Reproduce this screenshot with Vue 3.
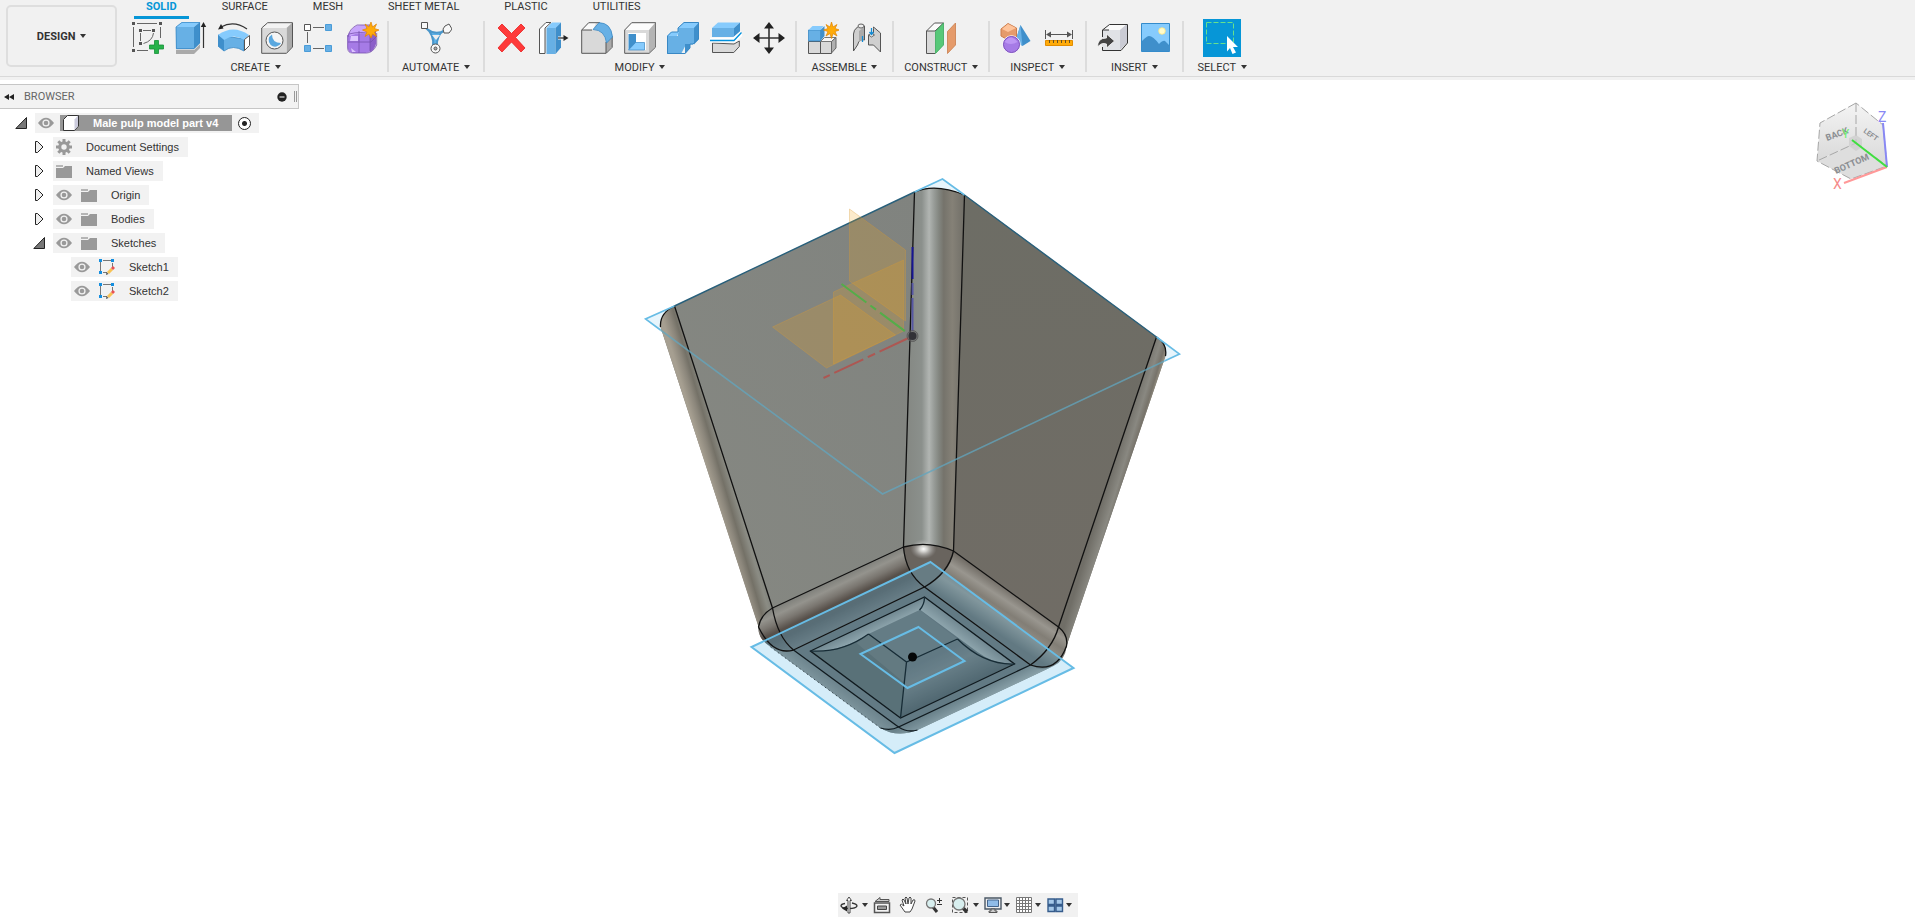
<script setup>
import { ref } from 'vue'

const tabs = ['SOLID', 'SURFACE', 'MESH', 'SHEET METAL', 'PLASTIC', 'UTILITIES']
const activeTab = ref('SOLID')

const groups = [
  { label: 'CREATE', icons: ['sketch', 'extrude', 'revolve', 'hole', 'pattern', 'form'] },
  { label: 'AUTOMATE', icons: ['automate'] },
  { label: 'MODIFY', icons: ['delete', 'presspull', 'fillet', 'shell', 'combine', 'split', 'move'] },
  { label: 'ASSEMBLE', icons: ['component', 'joint'] },
  { label: 'CONSTRUCT', icons: ['plane'] },
  { label: 'INSPECT', icons: ['interference', 'measure'] },
  { label: 'INSERT', icons: ['derive', 'image'] },
  { label: 'SELECT', icons: ['select'] }
]

const tree = [
  { label: 'Document Settings', level: 1, arrow: 'closed', icons: ['gear'] },
  { label: 'Named Views', level: 1, arrow: 'closed', icons: ['folder'] },
  { label: 'Origin', level: 1, arrow: 'closed', icons: ['eye', 'folder'] },
  { label: 'Bodies', level: 1, arrow: 'closed', icons: ['eye', 'folder'] },
  { label: 'Sketches', level: 1, arrow: 'open', icons: ['eye', 'folder'] },
  { label: 'Sketch1', level: 2, arrow: '', icons: ['eye', 'sketchitem'] },
  { label: 'Sketch2', level: 2, arrow: '', icons: ['eye', 'sketchitem'] }
]

const navTools = [
  { id: 'orbit', menu: true },
  { id: 'lookat', menu: false },
  { id: 'pan', menu: false },
  { id: 'zoom', menu: false },
  { id: 'fit', menu: true },
  { id: 'display', menu: true },
  { id: 'grid', menu: true },
  { id: 'viewports', menu: true }
]
</script>

<template>
  <div class="app">
    <svg class="sprite" width="0" height="0" aria-hidden="true">
      <symbol id="i-sketch" viewBox="0 0 32 32">
        <g fill="none" stroke="#666" stroke-width="1"><path d="M1.5 5v20M5 1.5h20M28.500 5v11M5 28.500h11M8.500 11v8M11 8.500h8M21.500 11q-1 8-10 10.500" /></g>
        <path fill="#555" d="M0 0h3v3H0zM27 0h3v3h-3zM0 27h3v3H0zM7 7h3v3H7zM20 7h3v3h-3zM7 20h3v3H7z" />
        <path fill="#27b24a" stroke="#159138" stroke-width=".8" d="M22.500 18.500h4v4.500h5v4h-5v4.500h-4V27h-5v-4h5z" />
      </symbol>
      <symbol id="i-extrude" viewBox="0 0 32 32">
        <path fill="#aaa" d="M1 28h18l6-6v4l-6 6H1z" /><path fill="#ddd" d="M1 27h18l6-6v1l-6 6H1z" />
        <path fill="#67b0e5" d="M1 5h18v22H1z" /><path fill="#86cbfd" d="M1 5l6-5h18l-6 5z" /><path fill="#3f8fcb" d="M19 5l6-5v21l-6 6z" />
        <path fill="none" stroke="#3988c4" stroke-width=".8" d="M1 5l6-4.600h17.600V21L19 26.600H1.400z" />
        <path stroke="#333" stroke-width="1.200" d="M28.500 4v22" /><path fill="#222" d="M28.500 0l2.700 5h-5.400z" />
      </symbol>
      <symbol id="i-revolve" viewBox="0 0 32 32">
        <path fill="#67b0e5" stroke="#3988c4" stroke-width=".8" d="M0 13v11l6 5q9-7 20 0V17z" />
        <path fill="#86cbfd" d="M0 13q15-11 31 0l-5 5q-10-7-20 0z" /><path fill="#3f8fcb" d="M0 13l6 5v11l-6-5z" />
        <path fill="#fff" stroke="#555" d="M26.500 17.500l5-4v10l-5 5z" />
        <path fill="none" stroke="#333" stroke-width="1.300" d="M3 5q13-7 26 2" /><path fill="#222" d="M0 7.500l3-5.500 2.500 4.500z" />
      </symbol>
      <symbol id="i-hole" viewBox="0 0 32 32">
        <path fill="#f3f3f3" d="M1 6l6-5h24l-5.500 5z" /><path fill="#aaa" d="M25.500 6L31 1v24l-5.500 6z" /><path fill="#d9d9d9" d="M1 6h24.500v25H1z" />
        <path fill="none" stroke="#555" d="M.7 6l6-5.300h24.800V25l-6 6.300H.7z" />
        <circle cx="13.500" cy="18.500" r="8.500" fill="#f5f5f5" stroke="#555" /><path fill="#5aa8df" d="M11 12.500a6.500 6.500 0 1 0 9 8.500q-9 0-9-8.500z" />
      </symbol>
      <symbol id="i-pattern" viewBox="0 0 32 32">
        <path stroke="#666" fill="none" d="M9 5.500h11M3.500 10v11M9 26.500h11" /><path fill="#fff" stroke="#555" d="M.5 2.500h6v6h-6z" />
        <path fill="#67b0e5" stroke="#4a9cd8" d="M21.500 2.500h6v6h-6zM.5 23.500h6v6h-6zM21.500 23.500h6v6h-6z" />
      </symbol>
      <symbol id="i-form" viewBox="0 0 32 32">
        <rect x=".5" y="9" width="24" height="22" rx="6" fill="#a67be6" /><path fill="#c7a4fb" d="M2 12q4-10 14-9h8q4 1 3 5l-4 5q-10-4-20 1z" />
        <path fill="#8c5fc9" d="M23 12l6-5v15q-1 5-6 8z" /><path fill="none" stroke="#7750ae" stroke-width=".8" d="M1 15q1-8 9-12h14M1 20h23l6-6M12 9v22M2 12q12-3 21 0v18M.7 13v13q0 5 5 5h14q6 0 10-8V11" />
        <path fill="#ddc5ff" d="M4 14h7v5H3zM4 26l5 4H5z" /><path fill="#ffab09" stroke="#e18400" stroke-width=".7" d="M24 0l1.500 5 4-3-2 4.500 4.500 1.500-4.500 2 2 4.500-4-2.500L24 16l-2-4-4 2.500 2-4.500-4.500-2L20 6.500 18 2l4 3z" />
      </symbol>
      <symbol id="i-automate" viewBox="0 0 32 32">
        <path d="M7 7q9 7 18 1Q16 13 17 25h-4Q15 13 5 5z" fill="#5eb2e8" stroke="#4a96ca" stroke-width="2" /><path fill="#eee" d="M12 13h8l-4 5z" />
        <path fill="#f8f8f8" stroke="#555" d="M1.500.5h6v6h-6zM25 4l4-2 3 5-3 4h-5l-1-4z" /><circle cx="15.500" cy="26.500" r="4.500" fill="#f8f8f8" stroke="#555" /><circle cx="15.500" cy="26.500" r="1.500" fill="#aaa" stroke="#555" />
      </symbol>
      <symbol id="i-delete" viewBox="0 0 32 32"><path fill="#fe3a3a" stroke="#e82020" stroke-width=".8" d="M7 2l9.500 9.500L26 2l4 4-9.500 9.500L30 26l-4 4-9.500-10L7 30l-4-4 9.500-10.500L3 6z" /></symbol>
      <symbol id="i-presspull" viewBox="0 0 32 32">
        <path fill="#dedede" d="M2 7h6v24H2z" /><path fill="#fff" stroke="#555" d="M7 31.500H1.500V7L8 .5h5L7 6z" />
        <path fill="#67b0e5" d="M8.500 6h9v26h-9z" /><path fill="#86cbfd" d="M8.500 6L14 .5h9L17.500 6z" /><path fill="#3f8fcb" d="M17.500 6L23 .5v25L17.500 32z" /><path fill="#fff" d="M20 14.500h4v3h-4z" />
        <path stroke="#222" stroke-width="1.200" d="M20 16h7" /><path fill="#222" d="M25.500 13l5 3-5 3z" />
      </symbol>
      <symbol id="i-fillet" viewBox="0 0 32 32">
        <path fill="#d9d9d9" d="M1 9l9-8h7l8 16v14H1z" /><path fill="#fafafa" d="M1 8l7-7h7l-3 7z" /><path fill="#aaa" d="M25 20l6-6v11l-6 6z" />
        <path fill="none" stroke="#555" d="M.7 8l7-7.300H19M.7 8v23.300h24.500l6-6V14M25 31V20M1 8h10" />
        <path fill="#67b0e5" stroke="#3988c4" stroke-width=".8" d="M12 7.500L18 .7q12 0 13.500 14.300L25.500 21Q24 8 12 7.500z" />
      </symbol>
      <symbol id="i-shell" viewBox="0 0 32 32">
        <path fill="#fcfcfc" d="M1 8l7-7h23l-6 7v23H1z" /><path fill="#b4b4b4" d="M25 8l6-7v24l-6 6z" /><path fill="#d9d9d9" d="M1.200 8h23.800v23H1.200z" /><path fill="none" stroke="#555" d="M.7 8l7-7.300h24V25l-6.500 6.300H.7z" />
        <path fill="#fff" d="M4 11h18v17H4z" /><path fill="#3f8fcb" d="M4.500 12h7.500v9.500L4.500 28z" /><path fill="#86cbfd" stroke="#3988c4" stroke-width=".7" d="M4.500 28l7-7.500h9V28z" />
      </symbol>
      <symbol id="i-combine" viewBox="0 0 32 32">
        <path fill="#67b0e5" d="M0 14h11V6l6-5.500h15V17l-6 5.500h-7L14 32H0z" /><path fill="#86cbfd" d="M0 14l4-4h8l-2 4zM11 6L17 .5h15L27 6z" />
        <path fill="#3f8fcb" d="M27 6l5-5.500V17l-5 5.500zM18 22h5v4l-5 6z" /><path fill="none" stroke="#3988c4" d="M.5 14l4-4H11V6L17 .5h14.500V17L26 22h-3v4l-5 5.500H.5z" />
      </symbol>
      <symbol id="i-split" viewBox="0 0 32 32">
        <path fill="#67b0e5" d="M2 6h22v9H2z" /><path fill="#86cbfd" d="M2 6l6-5.500h22L24 6z" /><path fill="#3f8fcb" d="M24 6l6-5.500V10l-6 5z" />
        <path fill="#d9d9d9" stroke="#555" d="M2.500 21v9.500h21.300l5.500-6V19L24 22z" /><path fill="none" stroke="#fff" stroke-width="5" d="M0 18h24l8-7" /><path fill="none" stroke="#0090dc" stroke-width="1.300" d="M0 18.500h24l7.500-8" />
      </symbol>
      <symbol id="i-move" viewBox="0 0 32 32"><path stroke="#333" stroke-width="1.600" d="M16 4v24M4 16h24" /><path fill="#222" d="M16 0l5 6.500H11zM16 32l5-6.500H11zM0 16l6.500-5v10zM32 16l-6.500-5v10z" /></symbol>
      <symbol id="i-component" viewBox="0 0 32 32">
        <path fill="#d9d9d9" stroke="#555" d="M1.500 19.500h12v12h-12zM13.500 19.500h11v12h-11z" /><path fill="#f7f7f7" stroke="#777" d="M13.500 19.500l4-4H29l-4.500 4z" /><path fill="#b0b0b0" stroke="#666" d="M24.500 19.500l4.500-4V26l-4.500 5z" />
        <path fill="#67b0e5" stroke="#3988c4" stroke-width=".8" d="M1.500 8h12v11h-12z" /><path fill="#86cbfd" d="M1.500 8l4-4h11l-3 4z" /><path fill="#3f8fcb" d="M13.500 8l4-4v10l-4 5z" />
        <path fill="#ffab09" stroke="#e18400" stroke-width=".7" d="M24.500 0l1.500 5 4-2.500-2 4L32.500 8 28 9.500l2 4.500-4-2.500-1.500 5L23 11.500 19 14l2-4.500L16.500 8 21 6.500l-2-4L23 5z" />
      </symbol>
      <symbol id="i-joint" viewBox="0 0 32 32">
        <path fill="#cfcfcf" stroke="#555" d="M3.500 12q0-4 4-7 4-4 7-1v14q-5-2-7 5l-4 6z" /><path fill="#aaa" d="M9 9l5-4v12l-5 3z" /><ellipse cx="11" cy="4" rx="3" ry="2" fill="#eee" stroke="#666" />
        <path fill="#cfcfcf" stroke="#555" d="M23.500 6.500V5l7 6v19l-7-7h-5V13l5-2z" /><path fill="#eee" stroke="#666" d="M18.500 13l3-2 3 2-3 2z" />
        <path stroke="#148bd3" stroke-width="1.300" fill="none" d="M12.500 14v6M21.500 6v6M19.500 10l2 2.500 2-2.500" />
      </symbol>
      <symbol id="i-plane" viewBox="0 0 32 32">
        <path fill="#d9d9d9" d="M2 8h8v23H2z" /><path fill="#fafafa" stroke="#555" d="M1.500 9l8-8h9L10 9z" /><path fill="none" stroke="#555" d="M1.500 9v22.500H10" />
        <path fill="#57c878" stroke="#3aa75a" stroke-width=".8" d="M10.500 9.500l8-8.500v22l-8 8.500z" /><path fill="#e59b6b" stroke="#c97d4d" stroke-width=".8" d="M22.500 9.500l8-8.500v22l-8 8.500z" />
      </symbol>
      <symbol id="i-interference" viewBox="0 0 32 32">
        <path fill="#e59b6b" stroke="#cd7d4c" d="M1 7l7-5.500 8.500 4.500v9L8 18l-7-4z" /><path fill="#ffc49b" d="M2 7l6-5 8 4-8 4z" />
        <path fill="#3f8fcb" d="M20.500 3l10 16-8 5-7-5z" /><path fill="#67b0e5" d="M20.500 3l2 21-7-5z" />
        <circle cx="11.500" cy="22.500" r="8.700" fill="#a67be6" stroke="#fff" /><circle cx="11.500" cy="22.500" r="8" fill="#a67be6" stroke="#8055bd" /><path fill="#bd96f4" d="M4.500 20q6-9 13 0-7 4-13 0z" />
      </symbol>
      <symbol id="i-measure" viewBox="0 0 32 32">
        <path fill="none" stroke="#555" d="M2.500 8v9M29.500 8v9M5 12.500h22" /><path fill="#555" d="M3 12.500l5-3v6zM29 12.500l-5-3v6z" /><path fill="#ffab09" stroke="#e28d00" d="M2.500 18.500h27v5h-27z" />
        <path stroke="#665022" d="M6.500 18v3M10.500 18v3M14.500 18v3M18.500 18v3M22.500 18v3M26.500 18v3" />
      </symbol>
      <symbol id="i-derive" viewBox="0 0 32 32">
        <path fill="#fafafa" d="M5 8l7-6h18l-7 6z" /><path fill="#e0e2e6" d="M5 8h18v20H5z" /><path fill="#cacbd4" d="M23 8l7-6v19l-7 7z" /><path fill="none" stroke="#333" d="M5.500 15V8l7-5.500h18V21L24 28.500H5.500V25M5.500 8H12" />
        <path fill="#444" stroke="#fafafa" stroke-width=".8" d="M.5 25q0-9 9-9v-4l8 7-8 7v-4q-5-2-9 3z" />
      </symbol>
      <symbol id="i-image" viewBox="0 0 32 32"><path fill="#86cbfd" stroke="#348bcb" d="M1.500 1.500h28v28h-28z" /><path fill="#3f8fcb" d="M2 19q5-5 7-5 4 0 10 8 4-4 6-3l5 5v5H2z" /><circle cx="22" cy="9" r="3.300" fill="#fffccb" stroke="#ffe47c" stroke-width=".8" /></symbol>
      <symbol id="i-select" viewBox="0 0 38 38"><path fill="#0696d7" d="M0 0h38v38H0z" /><path fill="none" stroke="#66e18c" stroke-dasharray="5 2" d="M3.500 3.500h27v21h-27z" /><path fill="#fff" d="M24 17l11 11h-5l3 5.500-3.500 1.500-2.500-6-3 3.500z" /></symbol>

      <symbol id="i-eye" viewBox="0 0 16 16"><path fill="#999" d="M0 8q8-10.500 16 0-8 10.500-16 0z" /><circle cx="8" cy="8" r="3.600" fill="#f2f2f2" /><circle cx="8" cy="8" r="2.300" fill="#999" /></symbol>
      <symbol id="i-folder" viewBox="0 0 16 16"><path fill="#b5b5b5" d="M0 2h7v2H0z" /><path fill="#999" d="M0 5h7l2-2h7v12H0z" /></symbol>
      <symbol id="i-gear" viewBox="0 0 16 16"><path stroke="#999" stroke-width="3" d="M8 0v16M0 8h16M2.300 2.300l11.400 11.400M13.700 2.300L2.300 13.700" /><circle cx="8" cy="8" r="5.800" fill="#999" /><circle cx="8" cy="8" r="2.700" fill="#f2f2f2" /></symbol>
      <symbol id="i-sketchitem" viewBox="0 0 16 16"><path fill="none" stroke="#777" d="M1.500 3v10M4 1.500h9M13.500 4v5M4 13.500h4" /><path fill="#148fe0" d="M0 0h3v3H0zM12 0h3v3h-3zM0 12h3v3H0z" /><path stroke="#f8c354" stroke-width="3" d="M9 14l4-4" /><path stroke="#e95252" stroke-width="3" d="M13 10l2-2" /><path fill="#555" d="M7 16l.5-3 2 2z" /></symbol>

      <symbol id="i-orbit" viewBox="0 0 18 18"><path fill="none" stroke="#333" stroke-width="1.300" d="M5 7.500q-4 .5-4 2.500 1 2.500 8 2.500t8-2.500q0-2-5-3" /><path fill="#fff" stroke="#444" d="M8 4.500H6.500L9 1l2.500 3.500H10V17H8z" /><path fill="#222" d="M2 12.500l5-3v6z" /></symbol>
      <symbol id="i-lookat" viewBox="0 0 18 18"><path fill="#f3f3f3" stroke="#555" stroke-width="1.500" d="M1.500 7h15v9.500h-15z" /><path fill="#999" stroke="#444" d="M4.500 10h9v3.500h-9z" /><path fill="#ccc" stroke="#555" d="M2 5.500l5-4v2h9v2z" /></symbol>
      <symbol id="i-pan" viewBox="0 0 18 18"><path fill="#fff" stroke="#444" stroke-linejoin="round" d="M6 16l-5-7q1-2 4 1L3 4q1-2 2 0l2 4-1-6q1-2 2 0l1 6 1-6q1-2 2 0v6l2-4q2-1 2 1l-3 8-2 3z" /></symbol>
      <symbol id="i-zoom" viewBox="0 0 18 18"><path stroke="#333" stroke-width="3" d="M8 11l4 5" /><circle cx="6" cy="7.500" r="4.500" fill="#d8efef" stroke="#777" stroke-width="1.300" /><path stroke="#333" d="M12 4.500h5M14.500 2v5M12 8.500h5" /></symbol>
      <symbol id="i-fit" viewBox="0 0 18 18"><path fill="none" stroke="#555" stroke-dasharray="3 2" d="M1.500 1.500h15v15h-15z" /><path stroke="#333" stroke-width="3.500" d="M11 11l5 5" /><circle cx="8" cy="8" r="6" fill="#d8efef" stroke="#777" stroke-width="1.300" /></symbol>
      <symbol id="i-display" viewBox="0 0 18 18"><path fill="#eee" stroke="#4b5866" stroke-width="1.400" d="M1 2h16v11H1z" /><path fill="#90bce8" stroke="#45658c" d="M3.500 4h11v6.500h-11z" /><path fill="#ccc" stroke="#555" d="M7 13h4v2h2v1.500H5V15h2z" /></symbol>
      <symbol id="i-grid" viewBox="0 0 18 18"><path fill="#fff" d="M1 1h16v16H1z" /><path fill="none" stroke="#777" d="M1.500 1.500h15v15h-15zM4.500 1v16M7.500 1v16M10.500 1v16M13.500 1v16M1 4.500h16M1 7.500h16M1 10.500h16M1 13.500h16" /></symbol>
      <symbol id="i-viewports" viewBox="0 0 18 18"><path fill="#a5c8e9" stroke="#365c8c" stroke-width="1.400" d="M2 3h6.500v5.500H2zM10 3h6.500v5.500H10zM2 10h6.500v5.500H2zM10 10h6.500v5.500H10z" /></symbol>
    </svg>

    <header class="toolbar">
      <button class="workspace" type="button">DESIGN <i class="caret"></i></button>
      <div class="ribbon">
        <nav class="tabs">
          <button v-for="t in tabs" :key="t" type="button" class="tab" :class="{ active: t === activeTab }" @click="activeTab = t">{{ t }}</button>
        </nav>
        <div class="groups">
          <section v-for="g in groups" :key="g.label" class="group">
            <div class="tools">
              <button v-for="i in g.icons" :key="i" type="button" class="tool" :class="{ chosen: i === 'select' }" :aria-label="i"><svg><use :href="'#i-' + i" /></svg></button>
            </div>
            <button type="button" class="group-label">{{ g.label }} <i class="caret"></i></button>
          </section>
        </div>
      </div>
    </header>

    <main class="workarea">
      <svg class="model" viewBox="635 170 645 600" width="645" height="600" role="img" aria-label="Model view">
        <defs>
          <linearGradient id="column" x1="0" x2="1" y1="0" y2="0">
            <stop offset="0" stop-color="#838681" /><stop offset=".3" stop-color="#8b908c" /><stop offset=".42" stop-color="#b1b5b2" /><stop offset=".5" stop-color="#989c98" /><stop offset=".58" stop-color="#838680" /><stop offset=".66" stop-color="#75736b" /><stop offset=".8" stop-color="#858177" /><stop offset="1" stop-color="#706e67" />
          </linearGradient>
          <linearGradient id="lface" x1="0" x2="1" y1="1" y2="0"><stop offset="0" stop-color="#868882" /><stop offset="1" stop-color="#80837f" /></linearGradient>
          <linearGradient id="rface" x1="0" x2="0" y1="0" y2="1"><stop offset="0" stop-color="#6d6d65" /><stop offset="1" stop-color="#706c65" /></linearGradient>
          <linearGradient id="ledge" gradientUnits="userSpaceOnUse" x1="701" y1="453" x2="725" y2="446"><stop offset="0" stop-color="#a69f91" /><stop offset=".3" stop-color="#8b867b" /><stop offset=".5" stop-color="#747167" /><stop offset=".8" stop-color="#8b8c84" /><stop offset="1" stop-color="#80827c" /></linearGradient>
          <linearGradient id="redge" gradientUnits="userSpaceOnUse" x1="1108" y1="480" x2="1128" y2="486"><stop offset="0" stop-color="#706e67" /><stop offset=".5" stop-color="#898881" /><stop offset=".75" stop-color="#77736a" /><stop offset="1" stop-color="#a9a18f" /></linearGradient>
          <linearGradient id="lfillet" gradientUnits="userSpaceOnUse" x1="836" y1="579" x2="855" y2="619"><stop offset="0" stop-color="#7f807b" /><stop offset=".17" stop-color="#94938d" /><stop offset=".35" stop-color="#7a7670" /><stop offset=".52" stop-color="#57504a" /><stop offset=".7" stop-color="#54504c" /><stop offset="1" stop-color="#686561" /></linearGradient>
          <linearGradient id="rfillet" gradientUnits="userSpaceOnUse" x1="1008" y1="587" x2="983" y2="625"><stop offset="0" stop-color="#69645d" /><stop offset=".3" stop-color="#99968f" /><stop offset=".5" stop-color="#827e76" /><stop offset=".65" stop-color="#8d8981" /><stop offset="1" stop-color="#62615d" /></linearGradient>
          <linearGradient id="llip" gradientUnits="userSpaceOnUse" x1="840" y1="682" x2="825" y2="702"><stop offset="0" stop-color="#6b6a66" /><stop offset="1" stop-color="#9a9993" /></linearGradient>
          <linearGradient id="rlip" gradientUnits="userSpaceOnUse" x1="970" y1="694" x2="978" y2="710"><stop offset="0" stop-color="#6c6c68" /><stop offset="1" stop-color="#aaa9a3" /></linearGradient>
          <linearGradient id="lrecess" gradientUnits="userSpaceOnUse" x1="864" y1="627" x2="872" y2="644"><stop offset="0" stop-color="#787773" /><stop offset=".7" stop-color="#aaa9a3" /><stop offset="1" stop-color="#8b8a85" /></linearGradient>
          <linearGradient id="rrecess" gradientUnits="userSpaceOnUse" x1="965" y1="629" x2="950" y2="649"><stop offset="0" stop-color="#777672" /><stop offset=".7" stop-color="#adaca6" /><stop offset="1" stop-color="#7b7a76" /></linearGradient>
          <linearGradient id="floor" gradientUnits="userSpaceOnUse" x1="930" y1="658" x2="951" y2="703"><stop offset="0" stop-color="#60605e" /><stop offset=".3" stop-color="#6c6b67" /><stop offset="1" stop-color="#403f3c" /></linearGradient>
          <radialGradient id="spot"><stop offset="0" stop-color="#fff" /><stop offset=".3" stop-color="#e9e9e6" stop-opacity=".8" /><stop offset="1" stop-color="#aaa" stop-opacity="0" /></radialGradient>
        </defs>

        <path fill="#ddf1fb" fill-opacity=".7" d="M645 320L942 180l237 175-297 140z" />
        <path fill="#77756f" d="M660 328Q659 314 674 307L914 193Q935 184 964 196L1156 338Q1167 345 1165 357L1066 647Q1065 661 1053 667L917 731Q896 739 880 729L770 648Q757 640 758 627z" />
        <path fill="url(#ledge)" d="M660 328Q659 314 674 307L772 609Q760 616 758 628z" />
        <path fill="url(#lface)" d="M674 307L914 193 903 548 772 609z" />
        <path fill="url(#column)" d="M914 193Q935 184 964 196L953 552Q927 542 903 548z" />
        <path fill="url(#rface)" d="M964 196L1156 338 1058 628 953 552z" />
        <path fill="url(#redge)" d="M1156 338Q1167 345 1165 357L1066 647 1058 628z" />
        <path fill="url(#lfillet)" d="M903 548L772 609Q752 620 760 638 770 653 793 651L924 588Q904 570 903 548z" />
        <path fill="url(#rfillet)" d="M953 552L1058 628Q1068 636 1066 649L1030 666 924 588Q950 575 953 552z" />
        <path fill="#69645e" d="M903 548Q927 541 953 552 950 574 924 588 903 570 903 548z" />
        <path fill="url(#rfillet)" d="M1058 628Q1072 641 1062 657 1050 674 1030 666 1054 648 1058 628z" />
        <ellipse cx="923" cy="550" rx="13" ry="10" fill="url(#spot)" />
        <path fill="#62625f" d="M924 588l106 78-132 62-105-77z" />
        <path fill="url(#llip)" d="M793 651l105 77q-10 6-18 1L770 648q12 8 23 3z" />
        <path fill="url(#rlip)" d="M898 728l132-62q11 8 23 1L917 731q-20 8-37-2 12 3 18-1z" />
        <path fill="#5d5d5a" d="M924 598l90 67-114 54-90-67z" />
        <path fill="#656461" d="M919 611l38 29-51 23-38-28z" />
        <path fill="url(#floor)" d="M906 663l51-23q27 26 57 25l-114 54z" />
        <path fill="#56554f" d="M868 635l38 28-6 56-90-67q30 3 58-17z" /><path fill="#77766f" opacity=".4" d="M868 635l38 28-3 20-47-39z" />
        <path fill="url(#lrecess)" d="M924 598L810 652q28 2 58-17l51-24q4-5 5-13z" />
        <path fill="url(#rrecess)" d="M924 598l90 67q-20 1-37-12l-57-42q3-5 4-13z" />
        <path fill="#64bee8" fill-opacity=".27" d="M930 563l143 106-179 85-143-106z" />

        <g fill="none" stroke="#111" stroke-width="1.300">
          <path d="M660 328Q659 314 674 307M914 193Q935 184 964 196M1156 338Q1167 345 1165 357" />
          <path d="M674 307L772 609Q777 638 793 651M914 193Q908 370 903 548 905 574 924 588M964 196Q957 400 953 552 948 574 924 588M1156 338L1058 628Q1052 650 1030 666" />
          <path d="M758 628Q760 616 772 609L903 548Q928 541 953 552L1058 628Q1068 636 1066 647Q1056 675 1030 666L924 588 793 651Q772 657 758 628" />
          <path stroke="#101a1f" d="M793 651l105 77 132-62M924 598l90 67-114 54-90-67zM880 729q10 3 18-1 9 6 19 3" />
          <path stroke="#172c36" d="M810 652q32 2 58-17M924 598q0 8-5 13M957 640q26 26 57 25M868 635l38 28 51-23M906 663l-6 56" />
          <path stroke="#26343a" stroke-width=".8" stroke-dasharray="1.500 3" d="M770 648L880 729" />
        </g>
        <g fill="none" stroke="#67bce5" stroke-width="1.600">
          <path d="M674 307L645 320l15 11M914 193l28-13 22 16M1156 338l23 17-15 7" /><path stroke="#29607b" stroke-width="1.400" d="M674 307L914 193M964 196l192 142" /><path stroke="#62a6bf" stroke-opacity=".75" d="M660 331L882 495 1164 362" />
          <path stroke-width="2" d="M930 563l143 106-179 85-143-106zM918 628l46 34-57 27-47-34z" />
        </g>
        <g fill="#f2a217" fill-opacity=".22" stroke="#d99a34" stroke-opacity=".4" stroke-width=".8">
          <path d="M849 210l56 41v71l-56-40z" /><path d="M833 293l70-32v71l-70 33z" /><path d="M772 328l68-32 55 40-69 33z" />
        </g>
        <g fill="none" stroke-width="2">
          <path stroke="#54ad49" stroke-dasharray="31 5 7 5" d="M841 285l66 49" /><path stroke="#ad5752" stroke-dasharray="32 5 8 5" d="M908 339l-85 40" />
          <path stroke="#171593" d="M912 248v32" /><path stroke="#5757a3" stroke-dasharray="12 3 34" d="M912 284v48" />
        </g>
        <circle cx="912" cy="337" r="5.500" fill="#666" fill-opacity=".5" stroke="#555" stroke-width=".8" /><circle cx="912" cy="337" r="4" fill="#323237" /><circle cx="912" cy="658" r="4.500" fill="#050708" />
      </svg>

      <aside class="browser">
        <div class="browser-head">
          <svg width="10" height="6" viewBox="0 0 10 6"><path fill="#222" d="M0 3l5-3v6zM5 3l5-3v6z" /></svg>
          <span>BROWSER</span>
          <button class="minimize" type="button" aria-label="Collapse"><svg width="10" height="10" viewBox="0 0 10 10"><circle cx="5" cy="5" r="4.700" fill="#222" /><path fill="#fff" d="M2.500 4.500h5v1h-5z" /></svg></button>
          <i class="grip"></i>
        </div>
        <ul class="tree">
          <li class="row level-0">
            <svg class="arrow" viewBox="0 0 12 12"><path fill="#777" stroke="#222" d="M11.500 .500v11H.800z" /></svg>
            <div class="item root">
              <svg class="glyph"><use href="#i-eye" /></svg>
              <span class="root-name"><svg width="16" height="16" viewBox="0 0 16 16"><path fill="#fff" stroke="#333" d="M.5 4.500l4-4h11V11l-4 4.500H.5z" /><path fill="#ccd" d="M11.500 4.500l3.500-4v10.500l-3.500 4z" /></svg>Male pulp model part v4</span>
              <input type="radio" class="activate" checked aria-label="Activate component" />
            </div>
          </li>
          <li v-for="n in tree" :key="n.label" class="row" :class="'level-' + n.level">
            <svg v-if="n.arrow === 'closed'" class="arrow" viewBox="0 0 12 12"><path fill="#eee" stroke="#222" d="M2.500 .500h2l5.500 5.500-5.500 5.500h-2z" /></svg>
            <svg v-else-if="n.arrow === 'open'" class="arrow" viewBox="0 0 12 12"><path fill="#777" stroke="#222" d="M11.500 .500v11H.800z" /></svg>
            <div class="item">
              <svg v-for="i in n.icons" :key="i" class="glyph"><use :href="'#i-' + i" /></svg>
              <span class="name">{{ n.label }}</span>
            </div>
          </li>
        </ul>
      </aside>

      <svg class="viewcube" width="90" height="100" viewBox="1810 95 90 100" role="img" aria-label="View cube">
        <defs><linearGradient id="cubeface" x1="0" x2="0" y1="0" y2="1"><stop offset="0" stop-color="#f4f4f4" /><stop offset="1" stop-color="#d9d9d9" /></linearGradient></defs>
        <path fill="url(#cubeface)" d="M1820 123l36-20v40l-39 18z" /><path fill="url(#cubeface)" d="M1856 103l27 22 4 41-31-23z" /><path fill="#dedede" d="M1817 161l39-18 31 23-36 13z" />
        <path fill="none" stroke="#a6a6a6" stroke-dasharray="9 3" d="M1856 103l-36 20-3 38 34 18 36-13-4-41zM1856 103v40l-39 18M1856 143l31 23" />
        <path fill="#ccc" opacity=".7" d="M1849 138l7-3 6 4v8l-6 4-7-5z" />
        <g class="cube-text">
          <text transform="translate(1827 141) rotate(-20)" font-size="9">BACK</text><text transform="translate(1863 132) rotate(35)" font-size="7">LEFT</text><text transform="translate(1836 174) rotate(-24)" font-size="9">BOTTOM</text>
        </g>
        <path stroke="#8888f4" stroke-width="2" d="M1883 123l4 44" /><path stroke="#f99" stroke-width="2" d="M1844 183l43-16" /><path stroke="#3fdf3f" stroke-width="2" d="M1852 140l35 27" />
        <g class="axis-text"><text x="1833" y="189" fill="#f58a8a">X</text><text x="1878" y="122" fill="#8888f4">Z</text><text x="1842" y="138" font-size="12" fill="#70f070">Y</text></g>
      </svg>

      <div class="navbar">
        <button v-for="n in navTools" :key="n.id" type="button" class="nav-tool" :class="n.id" :aria-label="n.id"><svg><use :href="'#i-' + n.id" /></svg><i v-if="n.menu" class="caret small"></i></button>
      </div>
    </main>
  </div>
</template>

<style>
html, body { margin: 0; background: #fff; }
</style>

<style scoped>
.app { display: flex; flex-direction: column; min-height: 100vh; background: #fff; color: #333; font: 11px/12px Roboto, "Liberation Sans", sans-serif; }
.sprite { position: absolute; }
button { border: 0; padding: 0; margin: 0; background: none; color: inherit; font: inherit; }
svg { display: block; }
.toolbar { position: relative; display: flex; align-items: flex-start; height: 80px; background: #f1f1f1; }
.toolbar::after { content: ""; position: absolute; left: 0; right: 0; top: 76px; height: 1px; background: #d9d9d9; }
.caret { display: inline-block; border: 3px solid transparent; border-top: 4px solid #333; border-bottom: 0; margin-left: 2px; vertical-align: 2px; }
.caret.small { margin: 0; }
.workspace { box-sizing: border-box; width: 111px; height: 62px; margin: 5px 5px 0 6px; padding-top: 1px; border: 2px solid #dedede; border-radius: 5px; font-weight: 700; }
.tabs { display: flex; gap: 21px; padding-left: 12px; }
.tab { padding: 1px 12px 3px; border-bottom: 3px solid transparent; white-space: nowrap; }
.tab.active { color: #0696d7; border-color: #0696d7; font-weight: 700; }
.groups { display: flex; margin-top: 2px; }
.group { display: flex; flex-direction: column; align-items: center; gap: 8px; min-width: 74px; height: 51px; padding: 0 10px; border-right: 2px solid #dcdcdc; }
.group:first-child { padding-right: 8px; }
.group:last-child { border: 0; min-width: 56px; }
.tools { display: flex; gap: 11px; padding-top: 1px; }
.tool, .tool svg { width: 32px; height: 32px; }
.tool.chosen, .tool.chosen svg { width: 38px; height: 38px; }
.tool.chosen { margin: -3px 0; }
.group-label { white-space: nowrap; }
.workarea { position: relative; flex: 1; }
.model { position: absolute; left: 50%; top: 89px; transform: translateX(-50%); }
.browser { position: relative; width: 299px; padding-top: 4px; }
.browser-head { display: flex; align-items: center; height: 23px; padding-left: 4px; border: 1px solid #c6c6c6; border-left: 0; background: #f2f2f2; color: #666; }
.browser-head span { margin-left: 10px; }
.minimize { margin-left: auto; }
.grip { width: 1px; height: 11px; margin: 0 1px 0 7px; border: solid #999; border-width: 0 1px; }
.tree { list-style: none; margin: 4px 0 0; padding: 0; font-family: "Liberation Sans", Arial, sans-serif; }
.row { display: flex; align-items: center; height: 20px; margin-bottom: 4px; }
.level-0 { padding-left: 15px; }
.level-1 { padding-left: 33px; }
.level-2 { padding-left: 71px; }
.arrow { width: 12px; height: 12px; margin-right: 8px; }
.item { display: flex; align-items: center; gap: 9px; height: 20px; padding: 0 9px 0 3px; background: #f2f2f2; }
.glyph { width: 16px; height: 16px; }
.name { margin-left: 5px; }
.root { gap: 6px; padding-right: 8px; }
.root-name { display: flex; align-items: center; gap: 14px; height: 16px; padding: 0 14px 0 3px; background: #969696; color: #fff; font-weight: 700; }
.activate { appearance: none; width: 13px; height: 13px; margin: 0; border: 1px solid #222; border-radius: 50%; background: radial-gradient(circle, #222 2px, #fff 3px); }
.viewcube { position: absolute; right: 15px; top: 15px; }
.cube-text { fill: #8b8e92; font-weight: 700; }
.axis-text { font-size: 14px; }
.navbar { position: absolute; left: 50%; bottom: 3px; transform: translateX(-50%); display: flex; align-items: center; gap: 8px; height: 24px; padding: 0 6px 0 2px; background: #f1f1f1; }
.nav-tool { display: flex; align-items: center; gap: 4px; }
.nav-tool svg { width: 18px; height: 18px; }
.display, .grid, .viewports { gap: 2px; }
.orbit, .fit, .display, .grid { margin-right: -3px; }
</style>
